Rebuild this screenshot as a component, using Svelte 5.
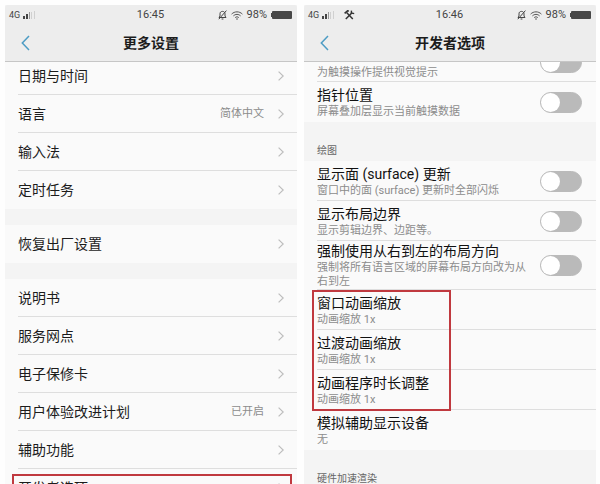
<script>
  const settings = [
    [
      { label: '日期与时间' },
      { label: '语言', value: '简体中文' },
      { label: '输入法' },
      { label: '定时任务' }
    ],
    [{ label: '恢复出厂设置' }],
    [
      { label: '说明书' },
      { label: '服务网点' },
      { label: '电子保修卡' },
      { label: '用户体验改进计划', value: '已开启' },
      { label: '辅助功能' },
      { label: '开发者选项', marked: true }
    ]
  ];

  let inputOptions = $state([
    { desc: '为触摸操作提供视觉提示', on: false },
    { title: '指针位置', desc: '屏幕叠加层显示当前触摸数据', on: false }
  ]);

  let drawOptions = $state([
    { title: '显示面 (surface) 更新', desc: '窗口中的面 (surface) 更新时全部闪烁', on: false },
    { title: '显示布局边界', desc: '显示剪辑边界、边距等。', on: false },
    { title: '强制使用从右到左的布局方向', desc: '强制将所有语言区域的屏幕布局方向改为从右到左', on: false }
  ]);

  const scales = ['窗口动画缩放', '过渡动画缩放', '动画程序时长调整'];
</script>

{#snippet topbar(title, time, tools)}
  <header>
    <div class="status">
      <div class="side">
        <span class="net">4G</span>
        <svg width="13" height="9" viewBox="0 0 13 9" aria-hidden="true">
          <path d="M0 5h2v3H0zM3 3h2v5H3z" fill="#444" />
          <path d="M6 1h1v7H6z" fill="#999" />
          <path d="M8 1h1v7H8zM11 0h1v8h-1z" fill="#d0d0d0" />
        </svg>
        {#if tools}
          <svg class="tools" width="11" height="10" viewBox="0 0 11 10" fill="none" stroke="#333" aria-hidden="true">
            <path d="M2.6 2.6 8.8 9" stroke-width="1.5" />
            <path d="M8 2.8 1.8 9" stroke-width="1.5" />
            <path d="M.6 3.4 3.6.8l1.2.5" stroke-width="1.6" />
            <path d="M7.5.6 7.3 3l2.9.6" stroke-width="1.4" />
          </svg>
        {/if}
      </div>
      <time>{time}</time>
      <div class="side end">
        <svg width="9" height="10" viewBox="0 0 9 10" fill="none" stroke="#444" aria-hidden="true">
          <path d="M1 7.5h7L7 6V3.8C7 2.2 6 1.4 4.5 1.4S2 2.2 2 3.8V6zM3.6 9h1.8M.8 9.2 8.4.6" />
        </svg>
        <svg width="12" height="9" viewBox="0 0 12 9" fill="none" stroke="#555" aria-hidden="true">
          <path d="M.6 3.1C3.6.1 8.4.1 11.4 3.1M2.4 4.9c2-2 5.2-2 7.2 0M4.2 6.6c1-1 2.6-1 3.6 0" />
          <circle cx="6" cy="8" r=".8" fill="#555" stroke="none" />
        </svg>
        <span class="percent">98%</span>
        <svg width="21" height="8" viewBox="0 0 21 8" fill="#484848" aria-hidden="true">
          <rect x="1" y="0" width="20" height="8" rx="1" />
          <rect x="0" y="2" width="2" height="4" />
        </svg>
      </div>
    </div>
    <div class="nav">
      <button class="back" aria-label="返回">
        <svg width="9" height="16" viewBox="0 0 9 16" fill="none" stroke="#4d9cc4" stroke-width="1.5" aria-hidden="true">
          <path d="M8 1 1.3 8 8 15" />
        </svg>
      </button>
      <h1>{title}</h1>
    </div>
  </header>
{/snippet}

{#snippet toggleRow(option)}
  <label class="option" class:partial={!option.title}>
    <span class="text">
      {#if option.title}<span class="title">{option.title}</span>{/if}
      <span class="desc">{option.desc}</span>
    </span>
    <input class="switch" type="checkbox" role="switch" bind:checked={option.on} />
  </label>
{/snippet}

{#snippet choiceRow(title, desc)}
  <button class="option">
    <span class="text">
      <span class="title">{title}</span>
      <span class="desc">{desc}</span>
    </span>
  </button>
{/snippet}

<main>
  <section class="phone">
    {@render topbar('更多设置', '16:45', false)}
    <div class="scroll">
      <div class="content menu">
        {#each settings as group}
          <div class="group">
            {#each group as item}
              <button class="item" class:marked={item.marked}>
                <span class="name">{item.label}</span>
                {#if item.value}<span class="value">{item.value}</span>{/if}
                <svg width="6" height="10" viewBox="0 0 6 10" fill="none" stroke="#bdbdbd" stroke-width="1.2" aria-hidden="true">
                  <path d="M.6.6 5.2 5 .6 9.4" />
                </svg>
              </button>
            {/each}
          </div>
        {/each}
      </div>
    </div>
  </section>

  <section class="phone">
    {@render topbar('开发者选项', '16:46', true)}
    <div class="scroll">
      <div class="content developer">
        <div class="group">
          {#each inputOptions as option}
            {@render toggleRow(option)}
          {/each}
        </div>
        <h2>绘图</h2>
        <div class="group">
          {#each drawOptions as option}
            {@render toggleRow(option)}
          {/each}
          <div class="scales">
            {#each scales as title}
              {@render choiceRow(title, '动画缩放 1x')}
            {/each}
          </div>
          {@render choiceRow('模拟辅助显示设备', '无')}
        </div>
        <h2>硬件加速渲染</h2>
      </div>
    </div>
  </section>
</main>

<style>
  :global(body) {
    margin: 0;
    background: #fefefe;
  }

  main {
    box-sizing: border-box;
    display: grid;
    grid-template-columns: 1fr 1fr;
    grid-template-rows: minmax(0, 1fr);
    gap: 7px;
    height: 100vh;
    padding: 5px 4px 0 5px;
    overflow: hidden;
    font-family: Roboto, 'Noto Sans CJK SC', sans-serif;
    color: #1c1c1c;
  }

  button {
    margin: 0;
    padding: 0;
    border: 0;
    background: none;
    font: inherit;
    color: inherit;
    text-align: left;
  }

  svg {
    flex: none;
  }

  .phone {
    display: flex;
    flex-direction: column;
    min-width: 0;
    background: #f4f4f4;
  }

  header {
    flex: none;
    height: 56px;
    border-bottom: 1px solid #c6c6c6;
    border-radius: 3px 3px 0 0;
    background: #ededed;
  }

  .status {
    display: grid;
    grid-template-columns: 1fr auto 1fr;
    align-items: center;
    height: 20px;
    padding: 0 5px 0 4px;
    font-size: 11px;
    line-height: 20px;
    color: #444;
  }

  .side {
    display: flex;
    align-items: center;
    gap: 3px;
  }

  .end {
    justify-content: flex-end;
    gap: 4px;
  }

  .net {
    font-size: 9px;
  }

  .tools {
    margin-left: 6px;
  }

  .nav {
    display: grid;
    grid-template-columns: 40px 1fr 40px;
    align-items: center;
    height: 36px;
  }

  .back {
    display: flex;
    justify-content: center;
    align-items: center;
    height: 36px;
  }

  h1 {
    margin: 0;
    font-size: 14px;
    line-height: 20px;
    font-weight: 700;
    text-align: center;
  }

  .scroll {
    flex: 1;
    min-height: 0;
    overflow: hidden;
  }

  /* both lists are scrolled a little way under the header */
  .menu {
    margin-top: -5px;
  }

  .developer {
    margin-top: -20px;
  }

  .group {
    background: #fafafa;
  }

  .menu .group + .group {
    margin-top: 16px;
  }

  .item {
    position: relative;
    display: flex;
    align-items: center;
    width: 100%;
    height: 38px;
    padding: 0 13px;
  }

  .item:not(:last-child)::before,
  .option:not(:last-child)::before,
  .scales::before {
    content: '';
    position: absolute;
    right: 0;
    bottom: 0;
    left: 13px;
    height: 1px;
    background: #dedede;
  }

  .name {
    flex: 1;
    font-size: 14px;
    line-height: 20px;
  }

  .value {
    margin-right: 14px;
    font-size: 11px;
    line-height: 20px;
    color: #8c8c8c;
  }

  .marked::after,
  .scales::after {
    content: '';
    position: absolute;
    border: 2px solid #c0393f;
    pointer-events: none;
  }

  .marked::after {
    inset: 5px 5px 0 7px;
  }

  .scales {
    position: relative;
  }

  .scales::after {
    top: 0;
    bottom: -1px;
    left: 8px;
    width: 135px;
  }

  h2 {
    display: flex;
    align-items: flex-end;
    box-sizing: border-box;
    height: 39px;
    margin: 0;
    padding: 0 13px 3px;
    font-size: 10px;
    line-height: 14px;
    font-weight: 400;
    color: #666;
  }

  .option {
    position: relative;
    display: flex;
    align-items: center;
    gap: 5px;
    box-sizing: border-box;
    width: 100%;
    min-height: 40px;
    padding: 1px 14px 1px 13px;
  }

  .text {
    display: flex;
    flex: 1;
    flex-direction: column;
    gap: 1px;
  }

  .partial .text {
    align-self: flex-end;
    padding-bottom: 1px;
  }

  .title {
    font-size: 14px;
    line-height: 18px;
    color: #111;
  }

  .desc {
    font-size: 11px;
    line-height: 14px;
    color: #8c8c8c;
  }

  .switch {
    appearance: none;
    box-sizing: border-box;
    flex: none;
    width: 42px;
    height: 21px;
    margin: 0;
    border: 1px solid #bababa;
    border-radius: 11px;
    background: #bababa;
  }

  .switch::before {
    content: '';
    display: block;
    width: 19px;
    height: 19px;
    border-radius: 50%;
    background: #fff;
  }

  .switch:checked {
    border-color: #4d9cc4;
    background: #4d9cc4;
  }

  .switch:checked::before {
    margin-left: auto;
  }
</style>
